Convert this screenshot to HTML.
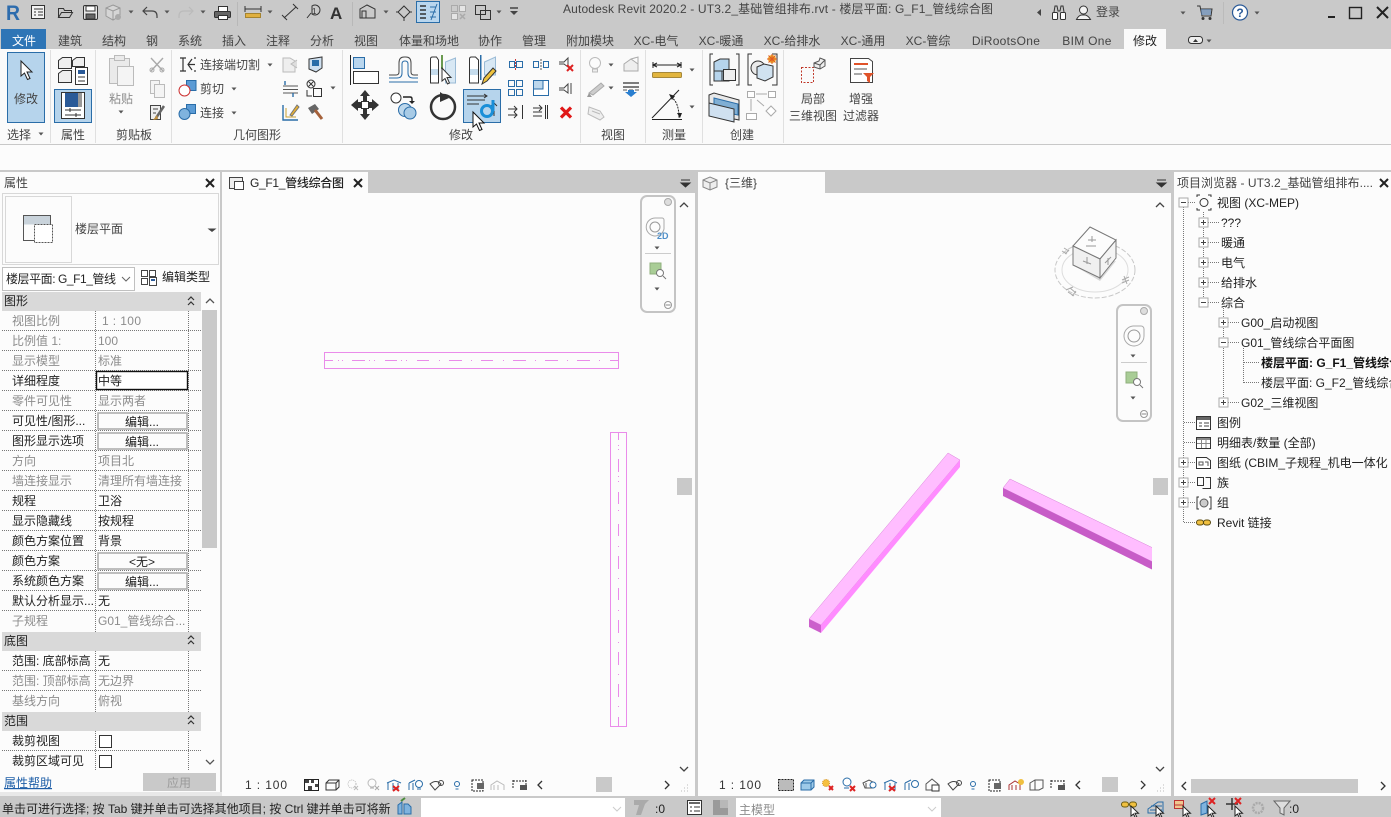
<!DOCTYPE html>
<html><head><meta charset="utf-8"><title>Autodesk Revit 2020.2</title>
<style>
html,body{margin:0;padding:0;background:#fcfcfc;width:1391px;height:817px;overflow:hidden}
svg{display:block;position:absolute;left:0;top:0}
text{font-family:"Liberation Sans","Noto Sans CJK SC",sans-serif;font-size:12px;fill:#333;white-space:pre}
.g{fill:#8c8c8c}.d{fill:#222}.k{fill:#444}.b{font-weight:bold;fill:#111}
.m{text-anchor:middle}
.s{fill:none;stroke:#333;stroke-width:1}
.u{fill:none;stroke:#2a6da8;stroke-width:1}
.dot{stroke:#777;stroke-width:1;stroke-dasharray:1 1;fill:none}
</style></head><body>
<svg width="1391" height="817" viewBox="0 0 1391 817" xmlns="http://www.w3.org/2000/svg">
<defs>
<path id="da" d="M-2.5-1.5h5L0 1.5z" fill="#555"/>
<g id="pl"><rect x="-4.5" y="-4.5" width="9" height="9" fill="#fff" stroke="#aaa"/><path d="M-2.5 0h5M0-2.5v5" stroke="#444"/></g>
<g id="mi"><rect x="-4.5" y="-4.5" width="9" height="9" fill="#fff" stroke="#aaa"/><path d="M-2.5 0h5" stroke="#444"/></g>
<g id="cl"><path d="M-4-4L4 4M4-4L-4 4" stroke="#222" stroke-width="2"/></g>
<g id="dbl"><path d="M-3-1l3-3 3 3M-3 4l3-3 3 3" fill="none" stroke="#333" stroke-width="1.200"/></g>
<path id="x" d="M-3-3L3 3M3-3L-3 3" stroke="#d22" stroke-width="2"/>
<clipPath id="c3"><rect x="698" y="193" width="454" height="579"/></clipPath>
<clipPath id="st"><rect x="0" y="796" width="390" height="21"/></clipPath>
<clipPath id="br"><rect x="1174" y="172" width="217" height="610"/></clipPath>
</defs>

<!-- base bands -->
<rect width="1391" height="817" fill="#fcfcfc"/>
<rect width="1391" height="49" fill="#c9c9c9"/>
<rect y="49" width="1391" height="95" fill="#fafafa"/>
<rect y="144" width="1391" height="1" fill="#c8c8c8"/>
<rect y="170" width="1391" height="2" fill="#c9c9c9"/>
<rect y="796" width="1391" height="21" fill="#c9c9c9"/>
<rect y="792" width="222" height="4" fill="#e8e8e8"/>

<!-- QAT -->
<text x="6" y="20" textLength="14" lengthAdjust="spacingAndGlyphs" style="font-size:21px;font-weight:bold;fill:#2d6cad">R</text>
<g class="s"><rect x="31.500" y="5.500" width="13" height="13" fill="#f4f4f4"/><path d="M34 9h9M34 12h2M38 12h5M34 15h2M38 15h5"/></g>
<path d="M58.500 17.500V8.500h5l1 2h7v2M58.500 17.500h11l3-5h-11l-3 5z" class="s" fill="#eee"/>
<g class="s"><rect x="83.500" y="5.500" width="14" height="14" rx="1.500" fill="#e6e6e6"/><rect x="86" y="6" width="9" height="5" fill="#fff"/><rect x="86" y="14" width="9" height="5" fill="#666"/></g>
<path d="M113 5l7 3v8l-7 4-7-4V8z" fill="#d5d5d5" stroke="#999"/><path d="M106 8l7 3 7-3M113 11v9" stroke="#999" fill="none"/><circle cx="118" cy="17" r="3" fill="#aaa"/>
<use href="#da" x="131" y="12"/>
<path d="M147 7l-4 4 4 4M143 11h9q5 0 5 5v2" fill="none" stroke="#444" stroke-width="1.200"/>
<use href="#da" x="167" y="12"/>
<path d="M189 7l4 4-4 4M193 11h-9q-5 0-5 5v2" fill="none" stroke="#bbb" stroke-width="1.200"/>
<use href="#da" x="203" y="12"/>
<g class="s"><rect x="218.500" y="6.500" width="9" height="5" fill="#fff"/><rect x="214.500" y="11.500" width="16" height="6" rx="1" fill="#666"/><rect x="218.500" y="15.500" width="9" height="4" fill="#fff"/></g>
<rect x="237" y="2" width="1" height="24" fill="#b8b8b8"/>
<path d="M245 9h16M245 6v6M261 6v6" stroke="#333" fill="none"/><rect x="245.500" y="13.500" width="15" height="4" fill="#e0b040" stroke="#a58430"/>
<use href="#da" x="270" y="12"/>
<path d="M284 18L296 7M282 15l5 5M293 4l5 5" stroke="#333" fill="none"/>
<path d="M307 18l4-5M312 6a5 5 0 1 1 0 8z" class="s"/><text x="312" y="14" style="font-size:8px">1</text>
<text x="330" y="19" style="font-size:17px;font-weight:bold;fill:#333">A</text>
<rect x="352" y="2" width="1" height="24" fill="#b8b8b8"/>
<path d="M367 5l8 4v9h-15V9z" class="s" fill="#ddd"/><path d="M362 11h4v7h-4z" class="s"/>
<use href="#da" x="386" y="12"/>
<path d="M404 6l6 6-6 6-6-6z" class="s" fill="#e8e8e8"/><path d="M398 12h-2M410 12h2M404 18v3" class="s"/>
<rect x="416.500" y="1.500" width="23" height="21" fill="#b9d6ee" stroke="#2a6da8"/>
<path d="M420 6h6M420 10h6M420 14h6M420 18h6" stroke="#333" stroke-width="1.500"/><path d="M437 4l-6 16M430 7h6M430 12h6M430 17h6" stroke="#2a6da8" fill="none"/>
<rect x="451.500" y="5.500" width="6" height="6" fill="#ccc" stroke="#aaa"/><rect x="459.500" y="5.500" width="6" height="6" fill="#e5e5e5" stroke="#aaa"/><rect x="451.500" y="13.500" width="6" height="6" fill="#e5e5e5" stroke="#aaa"/><path d="M460 14l5 5M465 14l-5 5" stroke="#aaa" stroke-width="1.500"/>
<rect x="475.500" y="5.500" width="10" height="9" class="s" fill="#fff"/><rect x="480.500" y="10.500" width="10" height="9" class="s" fill="#fff"/>
<use href="#da" x="499" y="12"/>
<path d="M510 8h8" stroke="#444" stroke-width="1.500"/><path d="M510 11h8l-4 4z" fill="#444"/>

<!-- Title -->
<text x="563" y="13" textLength="430" lengthAdjust="spacing" class="k">Autodesk Revit 2020.2 - UT3.2_基础管组排布.rvt - 楼层平面: G_F1_管线综合图</text>
<path d="M1041 9l-4 3.500 4 3.500z" fill="#444"/>
<g class="s"><rect x="1052.500" y="12.500" width="5" height="7" rx="1" fill="#fff"/><rect x="1060.500" y="12.500" width="5" height="7" rx="1" fill="#fff"/><path d="M1054 12l1-6h2l1 5h2l1-5h2l1 6"/></g>
<g class="s"><circle cx="1083.500" cy="10" r="4" fill="#f4f4f4"/><path d="M1076.500 19.500q2-4 5-4.500h4q3 1 5 4.500z" fill="#f4f4f4"/></g>
<text x="1096" y="16" class="k">登录</text>
<use href="#da" x="1183" y="13"/>
<path d="M1197 6h3l2 10h9l1-7h-11" class="s"/><rect x="1201" y="9" width="10" height="6" fill="#5a84b5" opacity=".6"/><circle cx="1203" cy="18.500" r="1.500" fill="#333"/><circle cx="1210" cy="18.500" r="1.500" fill="#333"/>
<rect x="1223" y="2" width="1" height="22" fill="#bbb"/>
<circle cx="1240" cy="12.500" r="7.500" fill="#fff" stroke="#2a5a98" stroke-width="1.200"/><text x="1240" y="17" class="m" style="font-weight:bold;fill:#2a5a98">?</text>
<use href="#da" x="1257" y="13"/>
<rect x="1328" y="16" width="7" height="2" fill="#222"/>
<rect x="1349.500" y="7.500" width="12" height="11" fill="none" stroke="#222" stroke-width="1.400"/>
<path d="M1377 7l11 11M1388 7l-11 11" stroke="#222" stroke-width="2"/>

<!-- Tabs -->
<rect x="1" y="29" width="45" height="20" fill="#2e75b6"/>
<text x="24" y="45" class="m" style="fill:#fff">文件</text>
<rect x="1124" y="29" width="42" height="20" fill="#fafafa"/>
<text x="70" y="45" class="m k">建筑</text><text x="114" y="45" class="m k">结构</text><text x="152" y="45" class="m k">钢</text><text x="190" y="45" class="m k">系统</text><text x="234" y="45" class="m k">插入</text><text x="278" y="45" class="m k">注释</text><text x="322" y="45" class="m k">分析</text><text x="366" y="45" class="m k">视图</text><text x="429" y="45" class="m k">体量和场地</text><text x="490" y="45" class="m k">协作</text><text x="534" y="45" class="m k">管理</text><text x="590" y="45" class="m k">附加模块</text><text x="656" y="45" class="m k">XC-电气</text><text x="721" y="45" class="m k">XC-暖通</text><text x="792" y="45" class="m k">XC-给排水</text><text x="863" y="45" class="m k">XC-通用</text><text x="928" y="45" class="m k">XC-管综</text><text x="1006" y="45" class="m k" style="letter-spacing:.3px">DiRootsOne</text><text x="1087" y="45" class="m k" style="letter-spacing:.3px">BIM One</text><text x="1145" y="45" class="m d">修改</text>
<rect x="1188.500" y="36.500" width="14" height="7" rx="3" fill="#eee" stroke="#333"/><path d="M1193 42l2.500-3 2.500 3z" fill="#333"/><use href="#da" x="1209" y="41"/>

<!-- Ribbon separators -->
<g fill="#e0e0e0"><rect x="50" y="50" width="1" height="93"/><rect x="95" y="50" width="1" height="93"/><rect x="171" y="50" width="1" height="93"/><rect x="342" y="50" width="1" height="93"/><rect x="580" y="50" width="1" height="93"/><rect x="645" y="50" width="1" height="93"/><rect x="702" y="50" width="1" height="93"/><rect x="783" y="50" width="1" height="93"/></g>
<!-- panel labels -->
<text x="7" y="139" class="k">选择</text><use href="#da" x="41" y="134"/>
<text x="73" y="139" class="m k">属性</text><text x="134" y="139" class="m k">剪贴板</text><text x="257" y="139" class="m k">几何图形</text><text x="461" y="139" class="m k">修改</text><text x="613" y="139" class="m k">视图</text><text x="674" y="139" class="m k">测量</text><text x="742" y="139" class="m k">创建</text>

<!-- Select -->
<rect x="7.500" y="52.500" width="37" height="70" fill="#b6d4ec" stroke="#2a6da8"/>
<path d="M21 61v15l3.500-3 3 6.500 2.500-1-3-6.500h5z" fill="#fff" stroke="#222"/>
<text x="26" y="103" class="m k">修改</text>

<!-- Type / instance properties -->
<g stroke="#333" fill="#eee"><path d="M58.500 60.500l4-3h9v11h-13zM58.500 73.500l4-3h9v12h-13zM72.500 60.500l4-3h8v9h-12z"/><rect x="75.500" y="67.500" width="12" height="17" fill="#fff"/></g><rect x="78" y="70" width="7" height="4" fill="#2a5a98"/><path d="M78 77h7M78 81h7" stroke="#333"/>
<rect x="54.500" y="89.500" width="37" height="33" fill="#b6d4ec" stroke="#2a6da8"/>
<rect x="61.500" y="92.500" width="23" height="26" fill="#fff" stroke="#333"/><rect x="65" y="93" width="13" height="14" fill="#2a5a98"/><rect x="78" y="93" width="4" height="14" fill="#999"/><path d="M65 110h16M65 115h16M70 108v4M76 113v4" stroke="#333"/>

<!-- Clipboard -->
<g stroke="#bbb" fill="#eaeaea"><rect x="109.500" y="58.500" width="20" height="25"/><rect x="114.500" y="55.500" width="10" height="5"/><rect x="117.500" y="66.500" width="16" height="19" fill="#f4f4f4"/></g>
<text x="121" y="103" class="m g">粘贴</text><use href="#da" x="121" y="112"/>
<path d="M151 58l12 13M163 58l-12 13" stroke="#aaa" stroke-width="1.400"/><circle cx="152" cy="70" r="2" fill="none" stroke="#aaa"/><circle cx="162" cy="70" r="2" fill="none" stroke="#aaa"/>
<g stroke="#bbb" fill="#f4f4f4"><rect x="150.500" y="80.500" width="9" height="13"/><rect x="154.500" y="84.500" width="10" height="13"/></g>
<rect x="150.500" y="105.500" width="10" height="14" fill="#eee" stroke="#444"/><path d="M153 109h5M153 113h3" stroke="#444"/><path d="M156 118l8-12" stroke="#666" stroke-width="2.500"/><path d="M157 115l-4 5 5-1z" fill="#c09040"/>

<!-- Geometry -->
<path d="M180 58h6M180 71h6M183 58v13M188 64.500h7M192 59l-4 5.500 4 5.500M195 57v2M195 70v2" stroke="#333" fill="none" stroke-width="1.200"/>
<text x="200" y="69" class="k">连接端切割</text><use href="#da" x="270" y="65"/>
<rect x="186.500" y="80.500" width="9.500" height="10" fill="#5b9bd5" stroke="#2a6da8"/><circle cx="184.500" cy="90.500" r="5.500" fill="#fff" stroke="#c33"/>
<text x="200" y="93" class="k">剪切</text><use href="#da" x="234" y="89"/>
<rect x="186.500" y="104.500" width="9" height="9" fill="#5b9bd5" stroke="#2a6da8"/><circle cx="184.500" cy="114" r="5.500" fill="#7fb3de" stroke="#2a6da8"/>
<text x="200" y="117" class="k">连接</text><use href="#da" x="234" y="113"/>
<path d="M283 58h7l5 3v11h-12z" fill="#eee" stroke="#bbb"/><path d="M297 60l-6 4 6 4" fill="#ddd" stroke="#bbb"/>
<path d="M309 59l13-2v11l-6 4-7-3z" fill="#cfe0f0" stroke="#333"/><rect x="312" y="60" width="7" height="6" fill="#2a6da8"/>
<path d="M283 86h15M283 89.500h15M283 93h15" stroke="#555"/><path d="M285 81v4M293 93v4" stroke="#2a6da8" stroke-width="1.400"/>
<circle cx="311" cy="84" r="4" class="s" fill="#fff"/><path d="M308.500 81.500l5 5M313.500 81.500l-5 5" stroke="#333"/><rect x="313.500" y="88.500" width="8" height="8" class="s" fill="#fff"/><path d="M307 90v6h5" class="s"/><use href="#da" x="333" y="88"/>
<path d="M283 105v15h15" stroke="#2a6da8" fill="none" stroke-width="1.400"/><path d="M286 108v9h10" stroke="#c9a030" fill="none"/><path d="M290 115l7-10 2 2-7 9z" fill="#e8b030" stroke="#777"/>
<path d="M308 108l7-4 4 5-7 5z" fill="#666"/><path d="M315 110l7 9" stroke="#a5613a" stroke-width="3"/>

<!-- Modify row 1 -->
<path d="M350.500 55v30" stroke="#222"/><rect x="353.500" y="57.500" width="11" height="11" fill="#b9d6ee" stroke="#2a6da8"/><rect x="353.500" y="71.500" width="25" height="12" fill="#fff" stroke="#333"/>
<path d="M389 75h7q3 0 3-3v-9q0-6 5-6h2q5 0 5 6v9q0 3 3 3h4" fill="none" stroke="#444"/><path d="M389 78h8q5 0 5-5v-9q0-3 3-3t3 3v9q0 5 5 5h5" fill="none" stroke="#2a6da8"/><path d="M389 82h29" fill="none" stroke="#2a6da8"/>
<path d="M430.500 83V59q0-2 2-2h4l2 3v23z" fill="#fff" stroke="#333"/><rect x="431" y="69" width="7" height="6" fill="#c5dced"/><rect x="441" y="55" width="2" height="14" fill="#6a9a50"/><path d="M445.500 83V62l10-4v25z" fill="#d8e8f4" stroke="#9abbd6"/><path d="M442 68v13l3-2.500 2.500 5.500 2-1-2.500-5.500h4z" fill="#fff" stroke="#333"/>
<path d="M469.500 83V59q0-2 2-2h4l3 3v23z" fill="#fff" stroke="#333"/><rect x="470" y="69" width="8" height="6" fill="#c5dced"/><rect x="480" y="55" width="1.500" height="25" fill="#2a6da8"/><path d="M484.500 75V62l11-5v18z" fill="#d8e8f4" stroke="#9abbd6"/><path d="M482 84l2-6 9-10 3 3-9 10z" fill="#eec23e" stroke="#333"/>
<rect x="509.500" y="61.500" width="5" height="6" class="u" fill="#cfe0f0"/><rect x="516.500" y="61.500" width="6" height="6" class="u" fill="#cfe0f0"/><path d="M515.500 59v11" stroke="#c33" stroke-dasharray="2 1"/>
<rect x="533.500" y="61.500" width="5" height="6" class="u" fill="#cfe0f0"/><rect x="543.500" y="61.500" width="5" height="6" class="u" fill="#cfe0f0"/><path d="M541 59v11" stroke="#555" stroke-dasharray="2 1"/>
<path d="M559 62h5l4-4v9l-4-3h-5" fill="none" stroke="#444"/><use href="#x" x="570" y="68"/>
<g class="u"><rect x="508.500" y="80.500" width="6" height="6"/><rect x="516.500" y="80.500" width="6" height="6"/><rect x="508.500" y="89.500" width="6" height="6"/><rect x="516.500" y="89.500" width="6" height="6"/></g>
<rect x="533.500" y="80.500" width="15" height="15" fill="#fff" stroke="#2a6da8"/><rect x="534" y="81" width="9" height="8" fill="#bcd7ec"/><path d="M543 81v8h-9" class="u"/>
<path d="M559 88h5l4-4v9l-4-3h-5M571 83v11" fill="none" stroke="#444"/>

<!-- Modify row 2 -->
<path d="M365 90l5 6h-3v6h5v-3l7 6-7 6v-3h-5v6h3l-5 6-5-6h3v-6h-5v3l-7-6 7-6v3h5v-6h-3z" fill="#333"/><rect x="361.500" y="101.500" width="7" height="7" fill="#fff" stroke="#333"/>
<circle cx="396" cy="98" r="5" fill="#fff" stroke="#333"/><path d="M403 97h7q2 0 2 2v3" fill="none" stroke="#222" stroke-width="1.400"/><path d="M409 101h6l-3 3z" fill="#222"/><circle cx="405" cy="110" r="6.500" fill="#bcd7ec" stroke="#2a6da8"/><circle cx="410" cy="113" r="6" fill="#a8cbe6" stroke="#2a6da8"/>
<circle cx="443" cy="107" r="12" fill="none" stroke="#333" stroke-width="2.500"/><path d="M440 92l9 6-9 4z" fill="#333"/>
<rect x="463.500" y="89.500" width="37" height="33" fill="#b6d4ec" stroke="#2a6da8"/>
<path d="M467 96h20M467 100h18M467 104h12" stroke="#333"/><path d="M484 94l3 2-3 2" fill="none" stroke="#333"/><path d="M494 116v-13M491 106l3-3 3 3" fill="none" stroke="#333"/>
<circle cx="487" cy="111" r="5.500" fill="none" stroke="#1a8fd8" stroke-width="3"/><path d="M493 100v11" stroke="#1a8fd8" stroke-width="3"/>
<path d="M473 112v15l3.500-3 3 6.500 2.500-1-3-6.500h5z" fill="#fff" stroke="#111"/>
<path d="M508 109h9M508 115h9M514 106l3 3-3 3M514 112l3 3-3 3" class="s"/><path d="M522.500 105v14" stroke="#333"/>
<path d="M533 108h9M533 112h9M533 116h9M539 105l3 3-3 3" class="s"/><path d="M547.500 105v14M545.500 105v14" stroke="#333"/>
<path d="M561 107.500l10 10M571 107.500l-10 10" stroke="#e01818" stroke-width="3.200"/>

<!-- View panel -->
<circle cx="595" cy="63" r="5.500" fill="#fbfbfb" stroke="#bbb"/><path d="M592.500 69h5v3h-5z" fill="#eee" stroke="#bbb"/><use href="#da" x="611" y="65"/>
<path d="M624 64l7-5 7 5v7h-14z" fill="#eee" stroke="#aaa"/><path d="M631 59l7-2v7" stroke="#aaa" fill="none"/>
<path d="M589 93l12-10 3 3-11 9z" fill="#ccc" stroke="#aaa"/><path d="M589 93l-2 4h5z" fill="#999"/><use href="#da" x="611" y="88"/>
<path d="M623 83h16M623 87h16" stroke="#333" stroke-width="1.300"/><path d="M623 90h16" stroke="#555" stroke-dasharray="4 2"/><path d="M628 90h6v2h3l-6 5-6-5h3z" fill="#2a7fd0"/>
<path d="M589 107l11 4 4 6-4 3-12-6z" fill="#eee" stroke="#bbb"/><path d="M592 111l8 3" stroke="#bbb"/>

<!-- Measure -->
<path d="M653 65h28M653 62v6M681 62v6" stroke="#222"/><path d="M657 63l-4 2 4 2M677 63l4 2-4 2" fill="none" stroke="#222"/>
<rect x="652.500" y="72.500" width="29" height="5" rx="1" fill="#e2b53e" stroke="#a5883a"/><use href="#da" x="692" y="70"/>
<path d="M652 118l27-28M652 119.500h30" stroke="#222"/><path d="M671 97q8 5 8 21" fill="none" stroke="#222" stroke-dasharray="2 1"/><path d="M669 94l6 2-3 4zM680 118l-3-5h5z" fill="#222"/><use href="#da" x="692" y="107"/>

<!-- Create -->
<path d="M713 54h-3v31h3M736 54h3v31h-3" class="s"/>
<path d="M714 62l6-3h9v22h-15z" fill="#b6d4ec" stroke="#333"/><path d="M714 71h15M722 71v10" stroke="#333"/><rect x="723.500" y="69.500" width="12" height="11" fill="#eee" stroke="#333"/>
<path d="M752 54h-4v31h4M772 54h5v31h-5" class="s"/>
<circle cx="758" cy="68" r="7" fill="#eaeaea" stroke="#333"/><path d="M757 67l7-3 9 2v11l-8 4-8-3z" fill="#d0e2f0" stroke="#333"/><circle cx="772" cy="59" r="4" fill="#f0b030"/><path d="M772 54v10M767 59h10M768.500 55.500l7 7M775.500 55.500l-7 7" stroke="#e05a20"/>
<path d="M709 95l5-2 25 7v20l-30-6z" fill="#e8e8e8" stroke="#333"/><path d="M714 98l24 6v11l-24-5z" fill="#7faed4" stroke="#2a6da8"/><path d="M709 103l25 6v13l-25-6z" fill="#cfe0f0" stroke="#333"/>
<g stroke="#aaa" fill="#fff"><rect x="747.500" y="91.500" width="7" height="6"/><rect x="768.500" y="91.500" width="7" height="6"/><rect x="746.500" y="113.500" width="10" height="6"/><path d="M771 106l5 5-5 5-5-5z"/></g><path d="M756 94h11M751 99v12M757 100l7 6" stroke="#aaa" fill="none"/>

<!-- Local 3D -->
<rect x="801.500" y="67.500" width="12" height="15" fill="none" stroke="#c0392b" stroke-dasharray="2 1.500"/>
<path d="M814 63l5-2 1-3 5 2v6l-5 3-6-2z" fill="#eee" stroke="#555"/><path d="M814 63l6 2 5-5M820 65v4" stroke="#555" fill="none"/>
<text x="813" y="103" class="m k">局部</text><text x="813" y="120" class="m k">三维视图</text>
<path d="M850.500 58.500h18l4 3v21h-22z" fill="#fff" stroke="#444"/><path d="M854 64h14" stroke="#e0532a" stroke-width="2"/><path d="M854 69h13M854 74h8" stroke="#aaa" stroke-width="2"/><path d="M863 73h11l-4 4v6l-3-2v-4z" fill="#e0532a"/>
<text x="861" y="103" class="m k">增强</text><text x="861" y="120" class="m k">过滤器</text>

<!-- Properties panel -->
<rect x="220" y="172" width="2" height="620" fill="#c9c9c9"/>
<text x="4" y="187" class="k">属性</text><use href="#cl" x="210" y="183"/>
<rect x="2.500" y="193.500" width="216" height="71" fill="#fcfcfc" stroke="#d8d8d8"/>
<rect x="5.500" y="196.500" width="66" height="66" fill="#fcfcfc" stroke="#d8d8d8"/>
<rect x="23.500" y="215.500" width="27" height="9" fill="#c9d3db"/><rect x="23.500" y="215.500" width="27" height="25" fill="none" stroke="#555"/><rect x="34.500" y="224.500" width="18" height="18" fill="#fff" stroke="#555" stroke-dasharray="2 1"/>
<text x="75" y="233" class="k">楼层平面</text><path d="M207.500 228.500h9l-4.500 3.500z" fill="#444"/>
<rect x="2.500" y="267.500" width="132" height="23" fill="#fff" stroke="#c0c0c0"/>
<text x="6" y="283" textLength="110" class="d">楼层平面: G_F1_管线</text><path d="M122 277l4 4 4-4" fill="none" stroke="#666"/>
<g stroke="#444" fill="#fff"><rect x="141.500" y="270.500" width="6" height="6"/><rect x="149.500" y="270.500" width="6" height="6"/><rect x="141.500" y="278.500" width="6" height="6"/><rect x="149.500" y="277.500" width="7" height="8"/></g><rect x="151" y="279" width="4" height="2" fill="#2a5a98"/>
<text x="162" y="281" class="d">编辑类型</text>

<g fill="#d9d9d9"><rect x="2" y="292" width="199" height="19"/><rect x="2" y="632" width="199" height="19"/><rect x="2" y="712" width="199" height="19"/></g>
<text x="4" y="305" class="d">图形</text><text x="4" y="645" class="d">底图</text><text x="4" y="725" class="d">范围</text>
<use href="#dbl" x="191" y="301"/><use href="#dbl" x="191" y="640"/><use href="#dbl" x="191" y="720"/>

<rect x="202" y="310" width="15" height="238" fill="#c9c9c9"/>
<path d="M206 303l4-4 4 4M206 760l4 4 4-4" fill="none" stroke="#555" stroke-width="1.300"/>

<path class="dot" d="M2 330.500h199M2 350.500h199M2 370.500h199M2 390.500h199M2 410.500h199M2 430.500h199M2 450.500h199M2 470.500h199M2 490.500h199M2 510.500h199M2 530.500h199M2 550.500h199M2 570.500h199M2 590.500h199M2 610.500h199M2 670.500h199M2 690.500h199M2 750.500h199"/>
<path class="dot" d="M95.500 311v321M188.500 311v321M95.500 651v61M188.500 651v61M95.500 731v40M188.500 731v40"/>

<text x="12" y="325" class="g">视图比例</text><text x="102" y="325" textLength="39" class="g">1 : 100</text>
<text x="12" y="345" class="g">比例值 1:</text><text x="98" y="345" class="g">100</text>
<text x="12" y="365" class="g">显示模型</text><text x="98" y="365" class="g">标准</text>
<text x="12" y="405" class="g">零件可见性</text><text x="98" y="405" class="g">显示两者</text>
<text x="12" y="465" class="g">方向</text><text x="98" y="465" class="g">项目北</text>
<text x="12" y="485" class="g">墙连接显示</text><text x="98" y="485" class="g">清理所有墙连接</text>
<text x="12" y="625" class="g">子规程</text><text x="98" y="625" class="g">G01_管线综合...</text>
<text x="12" y="685" class="g">范围: 顶部标高</text><text x="98" y="685" class="g">无边界</text>
<text x="12" y="705" class="g">基线方向</text><text x="98" y="705" class="g">俯视</text>
<text x="12" y="385" class="d">详细程度</text>
<rect x="96.500" y="371.500" width="91" height="18" fill="#fff" stroke="#111" stroke-width="1.400"/><text x="98" y="385" class="d">中等</text>
<text x="12" y="425" class="d">可见性/图形...</text>
<text x="12" y="445" class="d">图形显示选项</text>
<text x="12" y="505" class="d">规程</text><text x="98" y="505" class="d">卫浴</text>
<text x="12" y="525" class="d">显示隐藏线</text><text x="98" y="525" class="d">按规程</text>
<text x="12" y="545" class="d">颜色方案位置</text><text x="98" y="545" class="d">背景</text>
<text x="12" y="565" class="d">颜色方案</text>
<text x="12" y="585" class="d">系统颜色方案</text>
<text x="12" y="605" class="d">默认分析显示...</text><text x="98" y="605" class="d">无</text>
<text x="12" y="665" class="d">范围: 底部标高</text><text x="98" y="665" class="d">无</text>
<text x="12" y="745" class="d">裁剪视图</text>
<text x="12" y="765" class="d">裁剪区域可见</text>
<g fill="#fcfcfc" stroke="#aaa" stroke-width="1.500"><rect x="98" y="413" width="89" height="16"/><rect x="98" y="433" width="89" height="16"/><rect x="98" y="553" width="89" height="16"/><rect x="98" y="573" width="89" height="16"/></g>
<text x="142" y="426" class="m d">编辑...</text><text x="142" y="446" class="m d">编辑...</text><text x="142" y="566" class="m d">&lt;无&gt;</text><text x="142" y="586" class="m d">编辑...</text>
<rect x="99.500" y="735.500" width="12" height="12" fill="#fff" stroke="#333"/><rect x="99.500" y="755.500" width="12" height="12" fill="#fff" stroke="#333"/>
<text x="4" y="787" style="fill:#1f5fa8;text-decoration:underline">属性帮助</text>
<rect x="143" y="773" width="73" height="18" fill="#c9c9c9"/><text x="179" y="787" class="m" style="fill:#9a9a9a">应用</text>

<!-- View 1 -->
<rect x="222" y="171" width="473" height="22" fill="#c9c9c9"/>
<rect x="222" y="172" width="146" height="21" fill="#fcfcfc"/>
<rect x="229.500" y="177.500" width="13" height="11" fill="#eee" stroke="#444"/><rect x="234.500" y="181.500" width="9" height="8" fill="#fff" stroke="#444"/>
<text x="250" y="187" textLength="94" style="fill:#222;font-weight:500">G_F1_管线综合图</text><use href="#cl" x="358" y="183"/>
<path d="M681 180h9M681 183h9l-4.500 4z" stroke="#333" fill="#333"/>
<rect x="695" y="171" width="3" height="625" fill="#c9c9c9"/>
<rect x="641" y="196" width="34" height="116" rx="6" fill="#fcfcfc" stroke="#c4c4c4" stroke-width="2"/>
<circle cx="668" cy="202" r="3.500" fill="#ddd" stroke="#aaa"/><circle cx="668" cy="305" r="3.500" fill="#fff" stroke="#999"/><path d="M665.500 305h5" stroke="#888"/>
<path d="M656 218h6a2 2 0 0 1 2 2v9a9 9 0 1 1-8-11z" fill="#fcfcfc" stroke="#aaa"/><circle cx="655" cy="227" r="5" fill="none" stroke="#999"/>
<text x="657" y="239" style="font-size:9px;font-weight:bold;fill:#4f8fc8">2D</text>
<use href="#da" x="657" y="248"/><path d="M645 253.500h26" stroke="#ccc"/>
<rect x="650" y="263" width="11" height="11" fill="#a9cd96" stroke="#8fb07d"/><circle cx="660" cy="273" r="3.500" fill="#fff" stroke="#777"/><path d="M663 276l3 3" stroke="#777"/>
<use href="#da" x="657" y="289"/>
<path d="M680 207l4-4 4 4M680 767l4 4 4-4" fill="none" stroke="#444" stroke-width="1.300"/>
<rect x="677" y="478" width="15" height="17" fill="#c9c9c9"/>
<!-- plan ducts -->
<g fill="none" stroke="#ea8cea"><rect x="324.500" y="352.500" width="294" height="16"/><rect x="610.500" y="432.500" width="16" height="294"/>
<path d="M325 360.500h8M338 360.500h1M342 360.500h1M352 360.500h13M369 360.500h1M374 360.500h1M385 360.500h12M401 360.500h1M406 360.500h1M417 360.500h12M439 360.500h1M449 360.500h13M471 360.500h1M481 360.500h12M503 360.500h1M513 360.500h13M535 360.500h1M545 360.500h13M567 360.500h1M577 360.500h13M599 360.500h1M610 360.500h8"/>
<path d="M618.500 432v8M618.500 445v1M618.500 449v1M618.500 459v13M618.500 476v1M618.500 481v1M618.500 492v12M618.500 510v1M618.500 524v12M618.500 546v1M618.500 556v13M618.500 578v1M618.500 588v12M618.500 610v1M618.500 620v13M618.500 642v1M618.500 652v13M618.500 674v1M618.500 684v13M618.500 706v1M618.500 717v9"/></g>
<text x="245" y="789" textLength="42">1 : 100</text>

<!-- View1 bar icons -->
<rect x="304.500" y="779.500" width="14" height="11" fill="#fff" stroke="#222"/><path d="M305 780h4v3h-4zM311 780h3v3h-3zM315 784h3v3h-3zM308 786h4v4h-4z" fill="#444"/>
<path d="M326 783l3-3h10v7l-3 3h-10zM326 783h10v7M336 783l3-3" class="s"/>
<circle cx="352" cy="784" r="4" fill="none" stroke="#bbb" stroke-dasharray="1 1"/><path d="M354 786l4 4M358 786l-4 4" stroke="#bbb"/>
<circle cx="372" cy="783" r="4" fill="none" stroke="#bbb"/><path d="M370 788h4M375 786l4 4M379 786l-4 4" stroke="#aaa"/>
<path d="M387 783l7-3 7 3" fill="none" stroke="#2a6da8"/><path d="M388 783v7M393 783v7M398 783v7" stroke="#2a6da8"/><path d="M393 786l6 5M399 786l-6 5" stroke="#d22" stroke-width="2"/>
<path d="M409 783l6-3" fill="none" stroke="#2a6da8"/><path d="M409 783v7M413 783v7" stroke="#2a6da8"/><circle cx="419" cy="784" r="3.500" fill="#fff" stroke="#2a6da8"/><path d="M417 789h4" stroke="#2a6da8"/>
<path d="M430 784q6-5 11 0l-6 6z" fill="none" stroke="#444"/><circle cx="441" cy="783" r="2.500" fill="none" stroke="#444"/>
<circle cx="457" cy="784" r="2.500" fill="none" stroke="#2a6da8"/><path d="M455.500 789h3" stroke="#2a6da8"/>
<path d="M472 780h11v11h-11z" fill="none" stroke="#222" stroke-dasharray="2 1"/><rect x="477" y="783" width="7" height="6" fill="#666"/>
<path d="M491 790v-5l6-4 7 4v5M494 790v-5M498 790v-5" fill="none" stroke="#bbb"/>
<path d="M513 780v9M526 780v9M513 781h13" fill="none" stroke="#222" stroke-dasharray="2 1"/><rect x="520" y="785" width="7" height="5" fill="#555"/>
<path d="M542 781l-4 4 4 4M665 781l4 4-4 4" fill="none" stroke="#333" stroke-width="1.300"/>
<rect x="596" y="777" width="16" height="15" fill="#c9c9c9"/>
<path d="M681 791h1M684 791h1M687 791h1M684 788h1M687 788h1M687 785h1" stroke="#bbb"/>

<!-- View 2 -->
<rect x="698" y="171" width="473" height="22" fill="#c9c9c9"/>
<rect x="698" y="172" width="127" height="21" fill="#fcfcfc"/>
<path d="M703 180l7-3 7 3v7l-7 3-7-3z" fill="#eee" stroke="#888"/><path d="M703 180l7 3 7-3M710 183v7" stroke="#888" fill="none"/>
<text x="725" y="187" class="k">{三维}</text>
<path d="M1157 180h9M1157 183h9l-4.500 4z" stroke="#333" fill="#333"/>
<rect x="1171" y="171" width="3" height="625" fill="#c9c9c9"/>
<!-- viewcube -->
<ellipse cx="1095" cy="270" rx="40" ry="28" fill="none" stroke="#c8c8c8" stroke-dasharray="5 2"/>
<ellipse cx="1095" cy="270" rx="33" ry="22" fill="none" stroke="#ddd"/>
<path d="M1073 265l27 16 16-20z" fill="#d8d8d8"/>
<path d="M1090 227l26 13-16 19-27-13z" fill="#fcfcfc" stroke="#777"/>
<path d="M1073 246l27 13v19l-27-13z" fill="#f0f0f0" stroke="#777"/>
<path d="M1100 259l16-19v18l-16 20z" fill="#f4f4f4" stroke="#777"/>
<path d="M1088 240h8M1092 236v6M1086 246h10M1083 261l8 3M1087 257v7M1105 263l6-6M1108 258v7" stroke="#999"/>
<path d="M1064 248l5 3M1062 251l5 3M1065 254l4-4M1122 280l7-3M1122 283l7-3M1124 276l3 8M1070 288l6 5M1068 292l6 4M1066 290l7-3M1072 296l4-5" stroke="#aaa"/>
<rect x="1117" y="305" width="34" height="116" rx="6" fill="#fcfcfc" stroke="#c4c4c4" stroke-width="2"/>
<circle cx="1144" cy="311" r="3.500" fill="#ddd" stroke="#aaa"/><circle cx="1144" cy="414" r="3.500" fill="#fff" stroke="#999"/><path d="M1141.500 414h5" stroke="#888"/>
<path d="M1133 326h8a3 3 0 0 1 3 3v7a10 10 0 1 1-11-10z" fill="#fcfcfc" stroke="#aaa"/><circle cx="1134" cy="336" r="6" fill="none" stroke="#999"/>
<use href="#da" x="1133" y="356"/><path d="M1121 362.500h26" stroke="#ccc"/>
<rect x="1126" y="372" width="11" height="11" fill="#a9cd96" stroke="#8fb07d"/><circle cx="1137" cy="382" r="3.500" fill="#fff" stroke="#777"/><path d="M1140 385l3 3" stroke="#777"/>
<use href="#da" x="1133" y="398"/>
<path d="M1156 207l4-4 4 4M1156 767l4 4 4-4" fill="none" stroke="#444" stroke-width="1.300"/>
<rect x="1153" y="478" width="15" height="17" fill="#c9c9c9"/>
<!-- 3D ducts -->
<g clip-path="url(#c3)">
<path d="M809 619L948 453l12 7-139 165z" fill="#ffbdff" stroke="#d77fd7" stroke-width=".5"/>
<path d="M821 625l139-165v7L821 633z" fill="#ff8cff"/>
<path d="M809 619l12 6v8l-12-6z" fill="#cc60cc"/>
<path d="M1010 479l-7 9 150 74v-14z" fill="#ffbdff" stroke="#d77fd7" stroke-width=".5"/>
<path d="M1003 488v8l150 74v-8z" fill="#c75cc7"/>
</g>
<text x="719" y="789" textLength="42">1 : 100</text>
<!-- View2 bar icons -->
<rect x="778.500" y="779.500" width="15" height="11" fill="#bbb" stroke="#222" stroke-dasharray="2 1"/>
<path d="M801 783l3-3h10v7l-3 3h-10zM801 783h10v7M811 783l3-3" fill="#5da8dc" fill-opacity=".6" stroke="#2a6da8"/>
<circle cx="826" cy="783" r="3.500" fill="#f5c040" stroke="#d49020" stroke-dasharray="1 1"/><path d="M829 786l4 4M833 786l-4 4" stroke="#d22" stroke-width="2"/>
<circle cx="847" cy="782" r="4" fill="#fff" stroke="#2a6da8"/><path d="M844 788h5" stroke="#2a6da8"/><path d="M850 786l5 5M855 786l-5 5" stroke="#d22" stroke-width="2"/>
<path d="M863 783l6-3 4 2v6h-8zM866 783v5" fill="none" stroke="#555"/><circle cx="873" cy="785" r="3" fill="#fff" stroke="#2a6da8"/>
<path d="M884 783l7-3 6 3" fill="none" stroke="#2a6da8"/><path d="M885 783v7M890 783v7M895 783v7" stroke="#2a6da8"/><path d="M889 786l6 5M895 786l-6 5" stroke="#d22" stroke-width="2"/>
<path d="M905 783l6-3" fill="none" stroke="#2a6da8"/><path d="M905 783v7M909 783v7" stroke="#2a6da8"/><circle cx="915" cy="784" r="3.500" fill="#fff" stroke="#2a6da8"/>
<path d="M926 784l6-5 6 5v6h-12z" fill="none" stroke="#555"/><rect x="932" y="785" width="7" height="6" fill="#fff" stroke="#333"/>
<path d="M948 784q6-5 11 0l-6 6z" fill="none" stroke="#444"/><circle cx="959" cy="783" r="2.500" fill="none" stroke="#444"/>
<circle cx="973" cy="784" r="2.500" fill="none" stroke="#2a6da8"/><path d="M971.500 789h3" stroke="#2a6da8"/>
<path d="M989 780h11v11h-11z" fill="none" stroke="#222" stroke-dasharray="2 1"/><rect x="994" y="783" width="7" height="6" fill="#666"/>
<path d="M1009 790v-5l6-4 5 3v6M1012 790v-5M1016 790v-5" fill="none" stroke="#a33"/><circle cx="1021" cy="782" r="3" fill="#f0c040"/>
<path d="M1030 783l5-3h8v8l-4 2h-9zM1035 780v10" fill="none" stroke="#555"/>
<path d="M1051 780v9M1064 780v9M1051 781h13" fill="none" stroke="#222" stroke-dasharray="2 1"/><rect x="1058" y="785" width="7" height="5" fill="#555"/>
<path d="M1080 781l-4 4 4 4M1141 781l4 4-4 4" fill="none" stroke="#333" stroke-width="1.300"/>
<rect x="1102" y="777" width="16" height="15" fill="#c9c9c9"/>
<path d="M1157 791h1M1160 791h1M1163 791h1M1160 788h1M1163 788h1M1163 785h1" stroke="#bbb"/>

<!-- Project browser -->
<text x="1177" y="187" textLength="196" class="k">项目浏览器 - UT3.2_基础管组排布....</text><use href="#cl" x="1384" y="183"/>
<path class="dot" d="M1183.500 207v315M1203.500 212v91M1223.500 308v94M1243.500 348v36M1188 202.500h7M1208 222.500h11M1208 242.500h11M1208 262.500h11M1208 282.500h11M1208 302.500h11M1228 322.500h11M1228 342.500h11M1228 402.500h11M1244 362.500h15M1244 382.500h15M1184 422.500h11M1184 442.500h11M1188 462.500h7M1188 482.500h7M1188 502.500h7M1184 522.500h11"/>
<use href="#mi" x="1183.500" y="202.500"/>
<use href="#pl" x="1203.500" y="222.500"/><use href="#pl" x="1203.500" y="242.500"/><use href="#pl" x="1203.500" y="262.500"/><use href="#pl" x="1203.500" y="282.500"/><use href="#mi" x="1203.500" y="302.500"/>
<use href="#pl" x="1223.500" y="322.500"/><use href="#mi" x="1223.500" y="342.500"/><use href="#pl" x="1223.500" y="402.500"/>
<use href="#pl" x="1183.500" y="462.500"/><use href="#pl" x="1183.500" y="482.500"/><use href="#pl" x="1183.500" y="502.500"/>
<g clip-path="url(#br)">
<text x="1217" y="207" class="d">视图 (XC-MEP)</text>
<text x="1221" y="227" class="d">???</text><text x="1221" y="247" class="d">暖通</text><text x="1221" y="267" class="d">电气</text><text x="1221" y="287" class="d">给排水</text><text x="1221" y="307" class="d">综合</text>
<text x="1241" y="327" class="d">G00_启动视图</text><text x="1241" y="347" class="d">G01_管线综合平面图</text>
<text x="1261" y="367" class="b">楼层平面: G_F1_管线综合图</text><text x="1261" y="387" class="d">楼层平面: G_F2_管线综合图</text>
<text x="1241" y="407" class="d">G02_三维视图</text>
<text x="1217" y="427" class="d">图例</text><text x="1217" y="447" class="d">明细表/数量 (全部)</text><text x="1217" y="467" class="d">图纸 (CBIM_子规程_机电一体化</text><text x="1217" y="487" class="d">族</text><text x="1217" y="507" class="d">组</text><text x="1217" y="527" class="d">Revit 链接</text>
</g>
<!-- browser icons -->
<path d="M1197 197v-2h3M1208 195h3v2M1197 208v2h3M1208 210h3v-2" class="s"/><circle cx="1204" cy="202.500" r="4" class="s"/>
<rect x="1196.500" y="416.500" width="14" height="13" fill="#fff" stroke="#333"/><rect x="1197" y="417" width="13" height="3" fill="#666"/><path d="M1199 423h3M1204 423h5M1199 426h3M1204 426h5" stroke="#444"/>
<rect x="1196.500" y="437.500" width="14" height="11" fill="#fff" stroke="#333"/><rect x="1197" y="438" width="13" height="2" fill="#888"/><path d="M1197 443.500h13M1201.500 440v8M1206 440v8" stroke="#888"/>
<path d="M1196.500 457.500h10l4 3v8h-14z" fill="#fff" stroke="#333"/><path d="M1199 465h4v-3h-4zM1205 462h3v4" fill="none" stroke="#555"/>
<path d="M1197.500 477.500h6v8h-6zM1205.500 477.500h5v11h-8" fill="none" stroke="#333"/>
<path d="M1199 497h-2v12h2M1209 497h2v12h-2" class="s"/><circle cx="1204" cy="503" r="4" fill="#ccc" stroke="#555"/>
<rect x="1196.500" y="520" width="7" height="5" rx="2.500" fill="#f0c040" stroke="#5a4a10"/><rect x="1203.500" y="520" width="7" height="5" rx="2.500" fill="#f0c040" stroke="#5a4a10"/>
<path d="M1186 782l-4 4 4 4M1381 782l4 4-4 4" fill="none" stroke="#333" stroke-width="1.300"/>
<rect x="1191" y="779" width="167" height="14" fill="#c9c9c9"/>

<!-- Status bar -->
<text x="2" y="813" clip-path="url(#st)" class="d">单击可进行选择; 按 Tab 键并单击可选择其他项目; 按 Ctrl 键并单击可将新</text>
<path d="M398 805l4-3v12h-4zM404 804h4l3 3v7h-7z" fill="#7fb3de" stroke="#2a6da8"/><path d="M401 801l4-3" stroke="#4a8a3a" stroke-width="2"/>
<rect x="421" y="798" width="204" height="19" fill="#fff"/><path d="M613 807l4 4 4-4" fill="none" stroke="#ccc"/>
<path d="M634 800h15l-4 4-4 11h-5l3-10h-5z" fill="#aaa"/><text x="655" y="813" class="d">:0</text>
<rect x="687.500" y="800.500" width="14" height="14" fill="#fff" stroke="#333"/><path d="M689 803h11" stroke="#666" stroke-width="2"/><path d="M690 807h2M694 807h6M690 811h2M694 811h6" stroke="#333"/>
<rect x="713" y="800" width="15" height="15" fill="#9a9a9a"/><rect x="720" y="800" width="8" height="8" fill="#b8b8b8"/>
<rect x="736" y="798" width="205" height="19" fill="#fff"/><text x="739" y="814" class="g">主模型</text><path d="M928 807l4 4 4-4" fill="none" stroke="#ccc"/>
<rect x="1121.500" y="802" width="7" height="5" rx="2.500" fill="#f0c040" stroke="#6a5a10"/><rect x="1129.500" y="802" width="7" height="5" rx="2.500" fill="#f0c040" stroke="#6a5a10"/>
<path d="M1148 809l10-7h5v11h-15zM1151 806h11M1150 810h12" fill="none" stroke="#2a6da8"/>
<rect x="1174.500" y="800.500" width="9" height="8" fill="#f0c890" stroke="#b33"/><path d="M1174 805h10" stroke="#b33"/>
<path d="M1201 804l6-3v12l-6 2z" fill="#7fb3de" stroke="#2a6da8"/><use href="#x" x="1212" y="801"/>
<path d="M1226 804h12M1232 798v12" stroke="#333" stroke-width="1.500"/><use href="#x" x="1238" y="801"/>
<g fill="#fff" stroke="#222"><path d="M1131 806v10l2.500-2 2 4 1.500-.7-2-4h3.500z"/><path d="M1156 806v10l2.500-2 2 4 1.500-.7-2-4h3.500z"/><path d="M1183 806v10l2.500-2 2 4 1.500-.7-2-4h3.500z"/><path d="M1208 806v10l2.500-2 2 4 1.500-.7-2-4h3.500z"/><path d="M1235 806v10l2.500-2 2 4 1.500-.7-2-4h3.500z"/></g>
<circle cx="1258" cy="808" r="5" fill="none" stroke="#aaa" stroke-width="2.500" stroke-dasharray="2 1"/>
<path d="M1274 801h16l-6 7v7l-4-2v-5z" fill="#ddd" stroke="#666"/><text x="1289" y="813" class="d">:0</text>
</svg>
</body></html>
